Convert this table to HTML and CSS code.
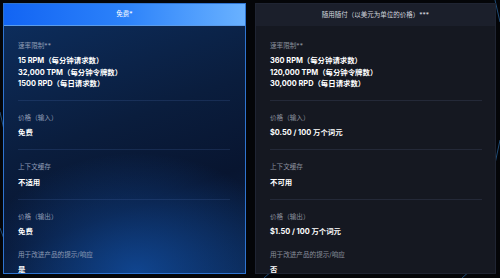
FILE: index.html
```html
<!DOCTYPE html>
<html lang="zh-CN">
<head>
<meta charset="utf-8">
<link rel="stylesheet" href="styles.css">
</head>
<body>
<svg class="bg-lines" width="500" height="278" viewBox="0 0 500 278">
  <line x1="495" y1="0" x2="500" y2="22" />
  <line x1="500" y1="140" x2="492" y2="178" />
  <line x1="264" y1="278" x2="282" y2="262" />
  <line x1="462" y1="278" x2="480" y2="262" />
  <line x1="0" y1="228" x2="8" y2="250" />
  <line x1="0" y1="112" x2="4" y2="130" />
</svg>
<main class="plans">
  <section class="card card-free">
    <header class="card-head">免费*</header>
    <div class="card-body">
      <div class="item">
        <div class="label">速率限制**</div>
        <div class="value">15 RPM（每分钟请求数）</div>
        <div class="value">32,000 TPM（每分钟令牌数）</div>
        <div class="value">1500 RPD（每日请求数）</div>
      </div>
      <div class="item">
        <div class="label">价格（输入）</div>
        <div class="value">免费</div>
      </div>
      <div class="item">
        <div class="label">上下文缓存</div>
        <div class="value">不适用</div>
      </div>
      <div class="item no-rule">
        <div class="label">价格（输出）</div>
        <div class="value">免费</div>
      </div>
      <div class="item last">
        <div class="label">用于改进产品的提示/响应</div>
        <div class="value">是</div>
      </div>
    </div>
  </section>
  <section class="card card-paid">
    <header class="card-head">随用随付（以美元为单位的价格）***</header>
    <div class="card-body">
      <div class="item">
        <div class="label">速率限制**</div>
        <div class="value">360 RPM（每分钟请求数）</div>
        <div class="value">120,000 TPM（每分钟令牌数）</div>
        <div class="value">30,000 RPD（每日请求数）</div>
      </div>
      <div class="item">
        <div class="label">价格（输入）</div>
        <div class="value">$0.50 / 100 万个词元</div>
      </div>
      <div class="item">
        <div class="label">上下文缓存</div>
        <div class="value">不可用</div>
      </div>
      <div class="item no-rule">
        <div class="label">价格（输出）</div>
        <div class="value">$1.50 / 100 万个词元</div>
      </div>
      <div class="item last">
        <div class="label">用于改进产品的提示/响应</div>
        <div class="value">否</div>
      </div>
    </div>
  </section>
</main>
</body>
</html>
```

FILE: styles.css
```css
html, body {
  margin: 0;
  padding: 0;
}
body {
  width: 500px;
  height: 278px;
  background: #040508;
  font-family: "Inter", "Noto Sans CJK SC", "Noto Sans", sans-serif;
  color: #fff;
  position: relative;
  overflow: hidden;
}
.bg-lines {
  position: absolute;
  left: 0;
  top: 0;
  z-index: 0;
}
.bg-lines line {
  stroke: #1f4c78;
  stroke-width: 1;
}
.plans {
  position: relative;
  z-index: 1;
  display: grid;
  grid-template-columns: 243px 241px;
  column-gap: 9px;
  padding: 3px 0 0 3px;
}
.card {
  height: 271px;
  box-sizing: border-box;
  display: flex;
  flex-direction: column;
  overflow: hidden;
}
.card-head {
  flex: none;
  box-sizing: border-box;
  display: flex;
  align-items: center;
  justify-content: center;
  font-size: 6.5px;
  line-height: 10px;
}
.card-body {
  flex: 1;
  padding: 3px 15px 0 14px;
  display: flex;
  flex-direction: column;
}
.item {
  padding: 12px 0 10.5px;
  border-bottom: 1px solid rgba(120, 150, 200, 0.14);
}
.item.no-rule {
  border-bottom: none;
  padding-bottom: 0;
}
.item.last {
  border-bottom: none;
  padding-top: 12.3px;
  padding-bottom: 0;
}
.label {
  font-size: 6.6px;
  line-height: 10px;
  margin-bottom: 4.2px;
}
.value {
  font-size: 7.4px;
  line-height: 11.5px;
  font-weight: 700;
  color: #fff;
}

/* free card */
.card-free {
  border: 1px solid #2f74d0;
  background:
    radial-gradient(ellipse 160px 120px at 55% 100%, rgba(18, 82, 170, 0.75), rgba(18, 82, 170, 0) 100%),
    linear-gradient(160deg, #0d2f60 0%, #0a1d3d 45%, #081530 70%, #0a2248 100%);
}
.card-free .card-head {
  margin: -1px -1px 0;
  height: 23px;
  background: linear-gradient(90deg, #1264f3 0%, #2c82fa 50%, #6ab2ff 100%);
  border-bottom: 1px solid #5b9cea;
  color: #fff;
}
.card-free .label {
  color: #8e9bb4;
}
.card-free .item {
  border-bottom-color: rgba(90, 130, 200, 0.18);
}
.card-free .item.no-rule,
.card-free .item.last {
  border-bottom: none;
}

/* paid card */
.card-paid {
  border: 1px solid #1f2432;
  background: #151821;
}
.card-paid .card-head {
  background: #1b1f2b;
  color: #d3d6de;
  margin: -1px -1px 0;
  height: 23px;
}
.card-paid .card-body {
  padding-left: 14px;
  padding-right: 13px;
}
.card-paid .label {
  color: #8a8f9c;
}
.card-paid .item {
  border-bottom-color: #242938;
}
.card-paid .item.no-rule,
.card-paid .item.last {
  border-bottom: none;
}
```
